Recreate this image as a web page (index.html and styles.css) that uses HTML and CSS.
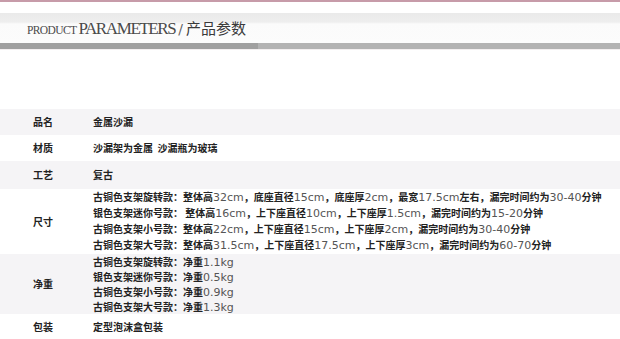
FILE: index.html
```html
<!DOCTYPE html>
<html lang="zh">
<head>
<meta charset="utf-8">
<link rel="stylesheet" href="styles.css">
</head>
<body>
<div class="page">
  <div class="topline"></div>
  <div class="header">
    <div class="title">
      <span class="t-small">PRODUCT</span><span class="t-big">PARAMETERS</span><span class="t-slash">/</span><span class="t-cn">产品参数</span>
    </div>
  </div>
  <div class="bar"><div class="bar-dark"></div></div>
  <div class="table">
    <div class="row gray h26"><div class="label">品名</div><div class="value">金属沙漏</div></div>
    <div class="row h26"><div class="label">材质</div><div class="value">沙漏架为金属&nbsp;&nbsp;沙漏瓶为玻璃</div></div>
    <div class="row gray h28"><div class="label">工艺</div><div class="value">复古</div></div>
    <div class="row multi l16">
      <div class="label">尺寸</div>
      <div class="value">
        <div class="line">古铜色支架旋转款：整体高<span class="n">32cm</span>，底座直径<span class="n">15cm</span>，底座厚<span class="n">2cm</span>，最宽<span class="n">17.5cm</span>左右，漏完时间约为<span class="n">30-40</span>分钟</div>
        <div class="line">银色支架迷你号款： 整体高<span class="n">16cm</span>，上下座直径<span class="n">10cm</span>，上下座厚<span class="n">1.5cm</span>，漏完时间约为<span class="n">15-20</span>分钟</div>
        <div class="line">古铜色支架小号款：整体高<span class="n">22cm</span>，上下座直径<span class="n">15cm</span>，上下座厚<span class="n">2cm</span>，漏完时间约为<span class="n">30-40</span>分钟</div>
        <div class="line">古铜色支架大号款：整体高<span class="n">31.5cm</span>，上下座直径<span class="n">17.5cm</span>，上下座厚<span class="n">3cm</span>，漏完时间约为<span class="n">60-70</span>分钟</div>
      </div>
    </div>
    <div class="row gray multi l15">
      <div class="label">净重</div>
      <div class="value">
        <div class="line">古铜色支架旋转款：净重<span class="n">1.1kg</span></div>
        <div class="line">银色支架迷你号款：净重<span class="n">0.5kg</span></div>
        <div class="line">古铜色支架小号款：净重<span class="n">0.9kg</span></div>
        <div class="line">古铜色支架大号款：净重<span class="n">1.3kg</span></div>
      </div>
    </div>
    <div class="row h26"><div class="label">包装</div><div class="value">定型泡沫盒包装</div></div>
  </div>
</div>
</body>
</html>
```
FILE: styles.css
```css
html, body {
  margin: 0;
  padding: 0;
  background: #fff;
}
.page {
  width: 620px;
  height: 339px;
  overflow: hidden;
  font-family: "DejaVu Sans", "Noto Sans CJK SC", sans-serif;
}
.topline {
  height: 2px;
  background: #c79ba9;
}
.header {
  margin-top: 11px;
  height: 30px;
  background: linear-gradient(#eaeaea 0, #eeeeee 9px, #fbfbfb 11px, #fcfcfc 100%);
  display: flex;
  align-items: flex-end;
}
.title {
  padding-left: 27px;
  padding-bottom: 4px;
  display: flex;
  align-items: baseline;
  color: #444;
}
.t-small {
  font-family: "Liberation Serif", serif;
  font-size: 11.5px;
  letter-spacing: -0.6px;
  color: #4a4a4a;
}
.t-big {
  font-family: "Liberation Serif", serif;
  font-size: 17px;
  letter-spacing: -1.4px;
  margin-left: 2px;
  color: #4a4a4a;
}
.t-slash {
  font-family: "DejaVu Sans", sans-serif;
  font-size: 14px;
  margin-left: 3px;
  color: #666;
}
.t-cn {
  font-family: "Noto Sans CJK SC", sans-serif;
  font-size: 15px;
  margin-left: 3px;
  color: #3a3a3a;
}
.bar {
  height: 6px;
  background: #b3b3b3;
  border-bottom: 1px solid #f3eff0;
}
.bar-dark {
  width: 258px;
  height: 100%;
  background: #a0a0a0;
}
.table {
  margin-top: 59px;
}
.row {
  display: flex;
  align-items: center;
  font-size: 10px;
  line-height: 14px;
  color: #222;
}
.row.gray {
  background: #f5f4f6;
}
.h26 { height: 26px; }
.h28 { height: 28px; }
.l16 { height: 65px; }
.l15 { height: 60px; }
.l16 .line { height: 16px; line-height: 16px; }
.l15 .line { height: 15px; line-height: 15px; }
.line {
  overflow: visible;
}
.label {
  width: 60px;
  padding-left: 33px;
  flex: none;
  font-weight: 700;
  font-family: "Noto Sans CJK SC", sans-serif;
}
.value {
  font-weight: 700;
  font-family: "Noto Sans CJK SC", sans-serif;
  white-space: nowrap;
}
.multi .value {
  align-self: flex-start;
}
.n {
  font-family: "DejaVu Sans", sans-serif;
  font-size: 11px;
  line-height: 1;
  font-weight: 400;
  color: #555;
}
```
